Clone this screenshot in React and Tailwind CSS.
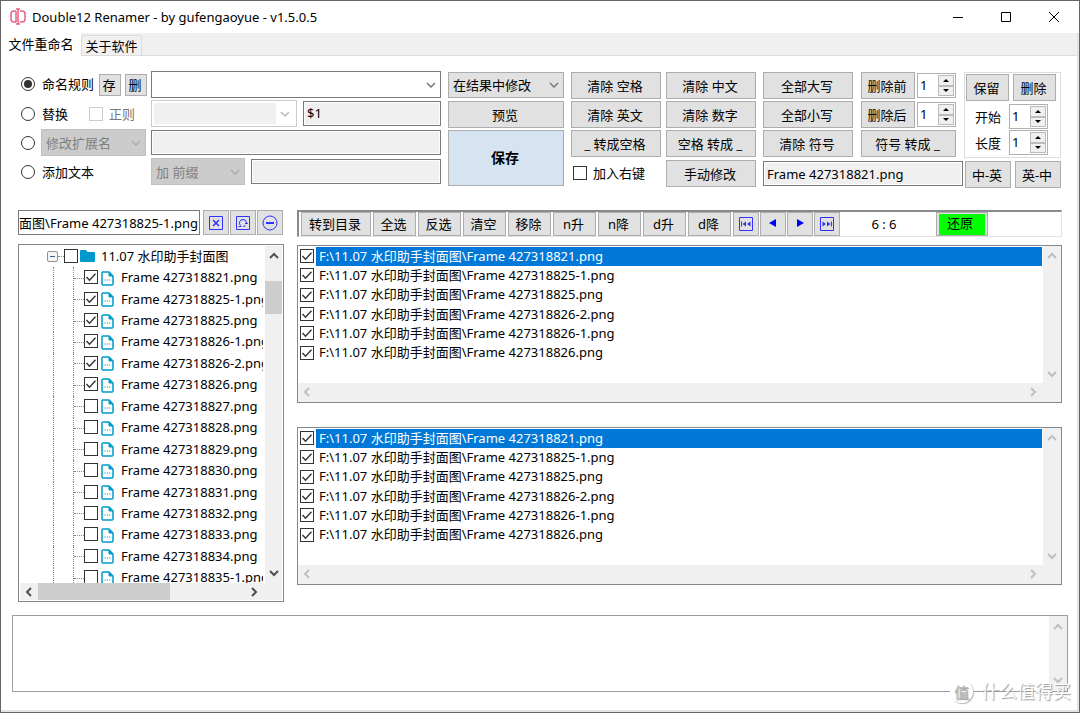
// src/App.jsx
import { useState } from "react";
import { clsx } from "clsx";

const FOLDER = "11.07 水印助手封面图";

const TREE_FILES = [
  "Frame 427318821.png",
  "Frame 427318825-1.png",
  "Frame 427318825.png",
  "Frame 427318826-1.png",
  "Frame 427318826-2.png",
  "Frame 427318826.png",
  "Frame 427318827.png",
  "Frame 427318828.png",
  "Frame 427318829.png",
  "Frame 427318830.png",
  "Frame 427318831.png",
  "Frame 427318832.png",
  "Frame 427318833.png",
  "Frame 427318834.png",
  "Frame 427318835-1.png",
];

const SELECTED_FILES = [
  "Frame 427318821.png",
  "Frame 427318825-1.png",
  "Frame 427318825.png",
  "Frame 427318826-2.png",
  "Frame 427318826-1.png",
  "Frame 427318826.png",
];

const field =
  "min-w-0 border border-[#7a7a7a] bg-[#f0f0f0] outline outline-1 -outline-offset-2 outline-white focus:outline-[#0078d7]";

function Button({ className, children, ...props }) {
  return (
    <button
      type="button"
      className={clsx(
        "flex shrink-0 items-center justify-center whitespace-pre border border-[#adadad] pr-[2px] hover:border-[#0078d7]",
        className
      )}
      {...props}
    >
      {children}
    </button>
  );
}

function IconButton({ children, ...props }) {
  return (
    <button
      type="button"
      className="flex w-[26px] shrink-0 items-center justify-center border border-[#adadad] bg-[#e1e1e1] hover:border-[#0078d7]"
      {...props}
    >
      {children}
    </button>
  );
}

function Chevron({ dir = "down", className }) {
  const paths = {
    down: "M1 3l4 4 4-4",
    up: "M1 7l4-4 4 4",
    left: "M7 1L3 5l4 4",
    right: "M3 1l4 4-4 4",
  };
  return (
    <svg viewBox="0 0 10 10" fill="none" stroke="currentColor" className={clsx("size-[10px] shrink-0", className)}>
      <path d={paths[dir]} />
    </svg>
  );
}

function CheckBox({ className, ...props }) {
  return (
    <span className="grid size-[14px] shrink-0">
      <input
        type="checkbox"
        className={clsx(
          "peer col-start-1 row-start-1 size-[14px] appearance-none border bg-white",
          className || "border-[#333]"
        )}
        {...props}
      />
      <svg
        viewBox="0 0 14 14"
        fill="none"
        stroke="#333"
        strokeWidth="1.4"
        className="pointer-events-none invisible col-start-1 row-start-1 size-[14px] peer-checked:visible"
      >
        <path d="M2.5 7l3 3.2 6-6.4" />
      </svg>
    </span>
  );
}

function Radio(props) {
  return (
    <span className="grid size-[14px] shrink-0 place-items-center">
      <input
        type="radio"
        name="mode"
        className="peer col-start-1 row-start-1 size-[14px] appearance-none rounded-full border border-[#333] bg-white"
        {...props}
      />
      <span className="pointer-events-none invisible col-start-1 row-start-1 size-2 rounded-full bg-[#333] peer-checked:visible" />
    </span>
  );
}

function Select({ label, options, className, chevron = "text-[#777]", ...props }) {
  return (
    <span className={clsx("grid items-center border", className)}>
      <select
        aria-label={label}
        className="col-start-1 row-start-1 h-full w-full min-w-0 appearance-none bg-transparent pl-1 outline-none"
        {...props}
      >
        {options.map((o) => (
          <option key={o}>{o}</option>
        ))}
      </select>
      <Chevron
        className={clsx("pointer-events-none col-start-1 row-start-1 mr-1 justify-self-end stroke-[1.5]", chevron)}
      />
    </span>
  );
}

function Spinner({ label }) {
  const [value, setValue] = useState(1);
  return (
    <div className="flex h-[25px] w-[39px] shrink-0 border border-[#b0b0b0] bg-white p-px">
      <input
        aria-label={label}
        inputMode="numeric"
        value={value}
        onChange={(e) => setValue(e.target.value)}
        className="w-0 min-w-0 flex-1 pb-[2px] pl-px outline-none"
      />
      <div className="flex w-4 flex-col">
        <button
          type="button"
          aria-label={`${label} 增加`}
          onClick={() => setValue(Number(value) + 1)}
          className="grid flex-1 place-items-center border border-[#bbb] bg-[#f0f0f0]"
        >
          <svg viewBox="0 0 6 3" className="h-[3px] w-[6px]">
            <path d="M0 3l3-3 3 3z" />
          </svg>
        </button>
        <button
          type="button"
          aria-label={`${label} 减少`}
          onClick={() => setValue(Number(value) - 1)}
          className="grid flex-1 place-items-center border border-[#bbb] bg-[#f0f0f0]"
        >
          <svg viewBox="0 0 6 3" className="h-[3px] w-[6px]">
            <path d="M0 0l3 3 3-3z" />
          </svg>
        </button>
      </div>
    </div>
  );
}

function TitleBar() {
  return (
    <header className="flex h-8 items-center pr-px pl-2">
      <svg viewBox="0 0 18 18" fill="none" stroke="#e8627f" strokeWidth="1.5" className="size-[18px]">
        <path d="M7 3H5a3 3 0 0 0-3 3v5a3 3 0 0 0 3 3h2M11 3h2a3 3 0 0 1 3 3v5a3 3 0 0 1-3 3h-2" />
        <path d="M9 1v15M7 1h4M7 16h4M7 3v11" />
      </svg>
      <h1 className="ml-[5px] flex-1 text-[13px]">Double12 Renamer - by gufengaoyue - v1.5.0.5</h1>
      <div className="flex h-full">
        <button type="button" aria-label="最小化" className="grid w-12 place-items-center">
          <svg viewBox="0 0 12 12" stroke="#000" className="size-3">
            <path d="M1 6.5h10" />
          </svg>
        </button>
        <button type="button" aria-label="最大化" className="grid w-12 place-items-center">
          <svg viewBox="0 0 12 12" fill="none" stroke="#000" className="size-3">
            <path d="M1.5 1.5h9v9h-9z" />
          </svg>
        </button>
        <button type="button" aria-label="关闭" className="grid w-12 place-items-center">
          <svg viewBox="0 0 12 12" stroke="#000" className="size-3">
            <path d="M1 1l10 10M11 1L1 11" />
          </svg>
        </button>
      </div>
    </header>
  );
}

function Tabs() {
  return (
    <nav className="flex h-[23px] bg-[#f0f0f0] text-[13px]">
      <button type="button" className="w-20 bg-white pb-[2px]">
        文件重命名
      </button>
      <div className="flex flex-1 items-end border-b border-[#dcdcdc]">
        <button type="button" className="h-5 w-[61px] border border-b-0 border-[#dcdcdc]">
          关于软件
        </button>
      </div>
    </nav>
  );
}

function RulePanel() {
  return (
    <div className="flex min-w-0 flex-1 flex-col gap-[2px]">
      <div className="flex h-[27px] items-center">
        <label className="flex w-[78px] items-center gap-[7px] pb-[2px]">
          <Radio defaultChecked />
          命名规则
        </label>
        <Button className="h-[22px] w-[22px] bg-[#e1e1e1]">存</Button>
        <Button className="ml-1 h-[22px] w-[22px] bg-[#e1e1e1]">删</Button>
        <Select label="命名规则" options={[""]} className="ml-1 h-full flex-1 border-[#7a7a7a]" />
      </div>
      <div className="flex h-[27px] items-center">
        <label className="flex w-[68px] items-center gap-[7px]">
          <Radio />
          替换
        </label>
        <label className="flex w-[62px] items-center gap-[6px] text-[#777]">
          <CheckBox className="border-[#ccc]" disabled />
          正则
        </label>
        <Select
          label="替换内容"
          options={[""]}
          disabled
          className="h-full w-[146px] border-[#ccc] bg-[linear-gradient(90deg,#f0f0f0_122px,#fff_122px)] bg-origin-content p-[2px] bg-clip-content"
          chevron="text-[#bbb]"
        />
        <input aria-label="替换为" defaultValue="$1" className={clsx(field, "ml-[6px] h-[25px] flex-1 px-[3px] pb-[2px]")} />
      </div>
      <div className="flex h-[27px] items-center">
        <label className="flex w-5 items-center">
          <Radio aria-label="修改扩展名" />
        </label>
        <Select
          label="扩展名"
          options={["修改扩展名"]}
          disabled
          className="h-full w-[105px] border-[#bfbfbf] bg-[#ccc] text-[#808080]"
          chevron="text-[#aaa]"
        />
        <input aria-label="新扩展名" className={clsx(field, "ml-[5px] h-[25px] flex-1")} />
      </div>
      <div className="flex h-[27px] items-center">
        <label className="flex w-[130px] items-center gap-[7px]">
          <Radio />
          添加文本
        </label>
        <Select
          label="位置"
          options={["加 前缀"]}
          disabled
          className="h-full w-[94px] border-[#bfbfbf] bg-[#ccc] text-[#808080]"
          chevron="text-[#aaa]"
        />
        <input aria-label="添加文本" className={clsx(field, "ml-[6px] h-[25px] flex-1")} />
      </div>
    </div>
  );
}

function ActionPanel() {
  return (
    <div className="flex items-start pt-px">
      <div className="ml-[7px] flex w-[116px] flex-col gap-[2px]">
        <Select
          label="修改方式"
          options={["在结果中修改"]}
          className="h-[26px] border-[#adadad] bg-[#e1e1e1]"
        />
        <Button className="mt-px h-[27px] bg-[#e1e1e1]">预览</Button>
        <Button className="h-14 bg-[#d6e4f2] text-[14px] font-bold">保存</Button>
      </div>

      <div className="ml-[7px] grid grid-cols-[90px_90px] gap-x-[5px] gap-y-[2px]">
        <Button className="h-[27px] bg-[#e1e1e1]">清除 空格</Button>
        <Button className="h-[27px] bg-[#e1e1e1]">清除 中文</Button>
        <Button className="h-[27px] bg-[#e1e1e1]">清除 英文</Button>
        <Button className="h-[27px] bg-[#e1e1e1]">清除 数字</Button>
        <Button className="h-[27px] bg-[#e1e1e1]">_ 转成空格</Button>
        <Button className="h-[27px] bg-[#e1e1e1]">空格 转成 _</Button>
        <label className="flex items-center gap-[6px] pb-px pl-[2px]">
          <CheckBox />
          加入右键
        </label>
        <Button className="mt-px h-[27px] bg-[#e1e1e1]">手动修改</Button>
      </div>

      <div className="ml-[7px] flex w-[200px] flex-col gap-[3px]">
        <div className="flex gap-2">
          <div className="flex w-[90px] flex-col gap-[2px]">
            <Button className="h-[27px] bg-[#e1e1e1]">全部大写</Button>
            <Button className="h-[27px] bg-[#e1e1e1]">全部小写</Button>
            <Button className="h-[27px] bg-[#e1e1e1]">清除 符号</Button>
          </div>
          <div className="flex w-[95px] flex-col gap-[2px]">
            <div className="flex h-[27px] items-center gap-[2px]">
              <Button className="h-full w-[54px] bg-[#e1e1e1]">删除前</Button>
              <Spinner label="删除前" />
            </div>
            <div className="flex h-[27px] items-center gap-[2px]">
              <Button className="h-full w-[54px] bg-[#e1e1e1]">删除后</Button>
              <Spinner label="删除后" />
            </div>
            <Button className="h-[27px] bg-[#e1e1e1]">符号 转成 _</Button>
          </div>
        </div>
        <input
          aria-label="文件名"
          defaultValue="Frame 427318821.png"
          className={clsx(field, "mt-px h-[25px] w-full px-[3px]")}
        />
      </div>

      <div className="ml-px flex w-[97px] flex-col gap-[3px]">
        <fieldset className="flex h-[86px] flex-col border border-[#dcdcdc] p-px">
          <div className="flex gap-1">
            <Button className="h-[27px] w-[43px] bg-[#e1e1e1]">保留</Button>
            <Button className="h-[27px] w-[43px] bg-[#e1e1e1]">删除</Button>
          </div>
          <div className="mt-[3px] flex items-center gap-2 pl-[9px]">
            开始
            <Spinner label="开始" />
          </div>
          <div className="mt-px flex items-center gap-2 pl-[9px]">
            长度
            <Spinner label="长度" />
          </div>
        </fieldset>
        <div className="flex justify-between pl-px">
          <Button className="h-[27px] w-[46px] bg-[#e1e1e1]">中-英</Button>
          <Button className="h-[27px] w-[46px] bg-[#e1e1e1]">英-中</Button>
        </div>
      </div>
    </div>
  );
}

function SquareIcon({ children }) {
  return (
    <svg viewBox="0 0 16 16" fill="none" stroke="#3030ff" className="size-4">
      <path d="M1.5 1.5h13v13h-13z" />
      {children}
    </svg>
  );
}

function FileIcon() {
  return (
    <svg viewBox="0 0 13 15" fill="none" stroke="#0099cc" className="h-[15px] w-[13px] shrink-0">
      <path d="M2 1h6l4 4v8q0 1-1 1H2q-1 0-1-1V2q0-1 1-1z" strokeWidth="1.5" />
      <path d="M8 1v4h4z" fill="#0099cc" />
      <path d="M3.5 9h1.2M5.9 9h1.2M8.3 9h1.2" />
    </svg>
  );
}

function FileTree() {
  return (
    <div className="flex w-[266px] shrink-0 flex-col gap-[9px]">
      <div className="flex h-[25px] gap-[3px] pr-px">
        <div className="flex min-w-0 flex-1 items-center justify-end overflow-hidden border border-[#7a7a7a] px-px">
          <span className="whitespace-nowrap">面图\Frame 427318825-1.png</span>
        </div>
        <div className="flex gap-px">
          <IconButton aria-label="清除路径">
            <SquareIcon>
              <path d="M5 5l6 6M11 5l-6 6" strokeWidth="1.5" />
            </SquareIcon>
          </IconButton>
          <IconButton aria-label="刷新">
            <SquareIcon>
              <path d="M5.5 10.5A3.5 3.5 0 0 1 8 4.5a3.5 3.5 0 0 1 3.5 3.5v1M10.5 10.5A3.5 3.5 0 0 1 8 11.5" />
              <path d="M3.5 11.5h3M10 8.5h3" />
            </SquareIcon>
          </IconButton>
          <IconButton aria-label="折叠">
            <svg viewBox="0 0 16 16" fill="none" stroke="#3030ff" className="size-4">
              <circle cx="8" cy="8" r="7" />
              <path d="M4 8h8" strokeWidth="2" />
            </svg>
          </IconButton>
        </div>
      </div>

      <div className="border border-[#828790] p-px">
        <div className="flex h-[337px]">
          <div className="mr-[2px] min-w-0 flex-1 overflow-hidden">
            <ul className="flex h-[343px] flex-col leading-4">
              <li className="flex flex-1 items-center pl-7">
                <span className="-ml-px grid size-[11px] shrink-0 place-items-center rounded-xs border border-[#919191] bg-[#f4f4f4]">
                  <span className="h-px w-[5px] bg-[#3b5ea8]" />
                </span>
                <span className="w-[6px] border-t border-dotted border-[#888]" />
                <label className="flex items-center pb-[2px] whitespace-nowrap">
                  <CheckBox />
                  <svg viewBox="0 0 15 13" fill="#0099cc" className="ml-[2px] h-[13px] w-[15px] shrink-0">
                    <path d="M1 1h5l1.5 2H14q1 0 1 1v8q0 1-1 1H1q-1 0-1-1V2q0-1 1-1z" />
                  </svg>
                  <span className="ml-[6px]">{FOLDER}</span>
                </label>
              </li>
              {TREE_FILES.map((name, i) => (
                <li key={name} className="flex flex-1 pl-[33px]">
                  <span className="w-5 shrink-0 border-l border-dotted border-[#888]" />
                  <span className="flex w-[11px] shrink-0 items-center border-l border-dotted border-[#888]">
                    <span className="w-full border-t border-dotted border-[#888]" />
                  </span>
                  <label className="flex items-center pb-[2px] whitespace-nowrap">
                    <CheckBox defaultChecked={i < 6} />
                    <span className="ml-[3px] flex pt-[2px]">
                      <FileIcon />
                    </span>
                    <span className="ml-[7px]">{name}</span>
                  </label>
                </li>
              ))}
            </ul>
          </div>
          <div className="flex w-[17px] flex-col items-center bg-[#f0f0f0] py-[5px] text-[#505050]">
            <Chevron dir="up" className="stroke-2" />
            <span className="mt-5 h-[33px] w-full bg-[#cdcdcd]" />
            <Chevron dir="down" className="mt-auto stroke-2" />
          </div>
        </div>
        <div className="flex h-[17px] items-center bg-[#f0f0f0] pr-[23px] pl-1 text-[#505050]">
          <Chevron dir="left" className="stroke-2" />
          <span className="ml-1 h-full w-[132px] bg-[#cdcdcd]" />
          <Chevron dir="right" className="ml-auto stroke-2" />
        </div>
      </div>
    </div>
  );
}

function Toolbar() {
  return (
    <div className="flex h-[27px] items-end border-t-2 border-r border-b border-l-2 border-t-[#8a8a8a] border-r-[#e3e3e3] border-b-[#e3e3e3] border-l-[#8a8a8a] pl-[2px]">
      <div className="flex h-full items-stretch gap-[2px]">
        <Button className="w-[70px] bg-[#e1e1e1] pb-px">转到目录</Button>
        {["全选", "反选", "清空", "移除", "n升", "n降", "d升", "d降"].map((t) => (
          <Button key={t} className="w-[43px] bg-[#e1e1e1] pb-px">
            {t}
          </Button>
        ))}
      </div>
      <div className="ml-[2px] flex h-full gap-px">
        <IconButton aria-label="第一个">
          <SquareIcon>
            <path d="M3.5 5.5v5" />
            <path d="M8 5.5v5L4.5 8zM12.5 5.5v5L9 8z" fill="#3030ff" stroke="none" />
          </SquareIcon>
        </IconButton>
        <IconButton aria-label="上一个">
          <svg viewBox="0 0 8 8" className="mb-[2px] size-2" fill="#0000ff">
            <path d="M7 0v8L0 4z" />
          </svg>
        </IconButton>
        <IconButton aria-label="下一个">
          <svg viewBox="0 0 8 8" className="mb-[2px] size-2" fill="#0000ff">
            <path d="M1 0v8l7-4z" />
          </svg>
        </IconButton>
        <IconButton aria-label="最后一个">
          <SquareIcon>
            <path d="M12.5 5.5v5" />
            <path d="M3.5 5.5v5L7 8zM8 5.5v5L11.5 8z" fill="#3030ff" stroke="none" />
          </SquareIcon>
        </IconButton>
      </div>
      <span className="flex-1 self-center pr-2 text-center">6 : 6</span>
      <Button className="mr-[73px] h-full w-[52px] bg-[#e1e1e1] pl-[2px]">
        <span className="grid h-[21px] w-[46px] place-items-center bg-[#00ff00] pr-1 pb-[2px]">还原</span>
      </Button>
    </div>
  );
}

function FileList() {
  const [active, setActive] = useState(0);
  return (
    <div className="border border-[#828790]">
      <div className="flex h-[137px]">
        <ul className="flex h-[117px] min-w-0 flex-1 flex-col pt-px pl-[2px] leading-4">
          {SELECTED_FILES.map((name, i) => (
            <li key={name} className="flex flex-1 items-center gap-[2px]" onClick={() => setActive(i)}>
              <span className="pb-px">
                <CheckBox aria-label={name} defaultChecked />
              </span>
              <span
                className={clsx(
                  "flex h-full flex-1 items-center pb-[2px] pl-[3px] whitespace-nowrap",
                  i === active && "bg-[#0078d7] text-white"
                )}
              >
                {`F:\\${FOLDER}\\${name}`}
              </span>
            </li>
          ))}
        </ul>
        <div className="ml-px flex w-[18px] flex-col items-center justify-between bg-[#f0f0f0] pt-[5px] pb-1 text-[#bfbfbf]">
          <Chevron dir="up" className="stroke-2" />
          <Chevron dir="down" className="stroke-2" />
        </div>
      </div>
      <div className="flex h-[19px] items-center justify-between bg-[#f0f0f0] pr-[23px] pb-px pl-1 text-[#bfbfbf]">
        <Chevron dir="left" className="stroke-2" />
        <Chevron dir="right" className="stroke-2" />
      </div>
    </div>
  );
}

export default function App() {
  return (
    <div className="relative flex min-h-screen min-w-[1000px] flex-col border border-[#666] bg-white font-['Noto_Sans','Noto_Sans_CJK_SC',sans-serif] text-[13px] leading-[18px] text-black">
      <TitleBar />
      <main className="flex flex-1 flex-col border-r-2 border-b-2 border-[#e3e3e3]">
        <Tabs />
        <section className="flex pt-[15px] pr-4 pl-5">
          <RulePanel />
          <ActionPanel />
        </section>
        <section className="mt-[22px] flex gap-[13px] pr-[15px] pl-[17px]">
          <FileTree />
          <div className="flex min-w-0 flex-1 flex-col">
            <Toolbar />
            <div className="mt-2 flex flex-col gap-6">
              <FileList />
              <FileList />
            </div>
          </div>
        </section>
        <section className="mt-[13px] mb-[18px] flex flex-1 pr-[9px] pl-[11px]">
          <div className="flex flex-1 border border-[#9a9da3]">
            <textarea aria-label="日志" className="block min-w-0 flex-1 resize-none outline-none" />
            <div className="flex w-[18px] flex-col items-center justify-between bg-[#f0f0f0] py-[6px] text-[#bfbfbf]">
              <Chevron dir="up" className="stroke-2" />
              <Chevron dir="down" className="stroke-2" />
            </div>
          </div>
        </section>
      </main>
      <div className="pointer-events-none absolute right-2 bottom-[9px] flex items-center gap-2 text-[18px] leading-6 text-white [text-shadow:1px_1px_1px_#999]">
        <span className="grid size-[23px] place-items-center rounded-full bg-white text-[15px] text-[#bbb] shadow-[1px_1px_1px_#bbb]">
          值
        </span>
        什么值得买
      </div>
    </div>
  );
}
